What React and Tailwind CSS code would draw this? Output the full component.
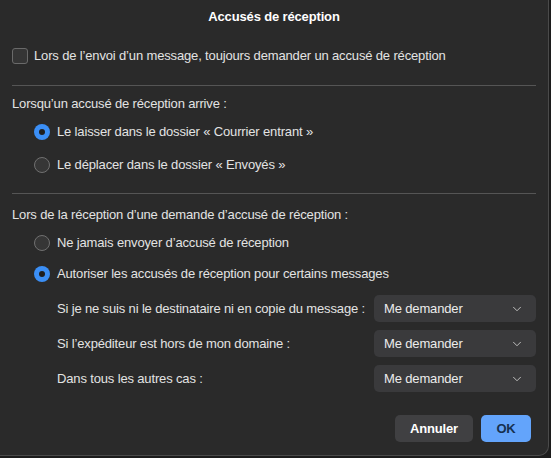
import React from 'react';
import { ChevronDown } from 'lucide-react';

function Radio({ checked, label }) {
  return (
    <label className="flex items-center gap-[7px] h-[16px]">
      {checked ? (
        <span className="flex items-center justify-center w-[16px] h-[16px] rounded-full bg-[#3b8ff6]">
          <span className="w-[6px] h-[6px] rounded-full bg-[#1f1f1f]" />
        </span>
      ) : (
        <span className="w-[16px] h-[16px] rounded-full border border-[#707070] bg-[#363636]" />
      )}
      <span>{label}</span>
    </label>
  );
}

function Select({ value }) {
  return (
    <div className="flex items-center justify-between w-[162px] h-[27px] pl-[10px] pr-[12px] rounded-[5px] bg-[#3a3a3c] text-[#ececec]">
      <span>{value}</span>
      <ChevronDown size={14} strokeWidth={1.5} className="text-[#cfcfcf]" />
    </div>
  );
}

export default function App() {
  const rows = [
    'Si je ne suis ni le destinataire ni en copie du message :',
    "Si l’expéditeur est hors de mon domaine :",
    'Dans tous les autres cas :',
  ];

  return (
    <div className="flex w-[551px] h-[458px] bg-[#1c1c1c]" style={{ fontFamily: '"Liberation Sans", Arial, sans-serif' }}>
      <div className="w-[549px] h-[456px] bg-[#2a2a2a] border-r border-b border-[#4a4a4a] rounded-br-[10px] text-[13px] leading-[16px] tracking-[-0.15px] text-[#e3e3e3]">
        {/* Title */}
        <div className="pt-[9px] text-center font-bold text-white">Accusés de réception</div>

        {/* Request receipt */}
        <div className="mt-[23px] px-[12px] flex items-center gap-[6px] h-[16px]">
          <span className="w-[16px] h-[16px] rounded-[3px] border border-[#6a6a6a] bg-[#353535]" />
          <span>Lors de l’envoi d’un message, toujours demander un accusé de réception</span>
        </div>

        <div className="mx-[12px] mt-[21px] border-t border-[#555555]" />

        {/* Incoming receipt */}
        <div className="px-[12px] pt-[10px]">
          <div>Lorsqu’un accusé de réception arrive :</div>
          <div className="mt-[12px] pl-[22px] flex flex-col gap-[17px]">
            <Radio checked label="Le laisser dans le dossier « Courrier entrant »" />
            <Radio label="Le déplacer dans le dossier « Envoyés »" />
          </div>
        </div>

        <div className="mx-[12px] mt-[20px] border-t border-[#555555]" />

        {/* Request received */}
        <div className="px-[12px] pt-[13px]">
          <div>Lors de la réception d’une demande d’accusé de réception :</div>
          <div className="mt-[12px] pl-[22px] flex flex-col gap-[15px]">
            <Radio label="Ne jamais envoyer d’accusé de réception" />
            <Radio checked label="Autoriser les accusés de réception pour certains messages" />
          </div>
          <div className="mt-[13px] pl-[45px] flex flex-col gap-[8px]">
            {rows.map((r) => (
              <div key={r} className="flex items-center">
                <span className="flex-1">{r}</span>
                <Select value="Me demander" />
              </div>
            ))}
          </div>
        </div>

        {/* Buttons */}
        <div className="mt-[23px] pr-[17px] flex justify-end gap-[8px]">
          <button className="w-[78px] h-[27px] rounded-[5px] bg-[#404042] text-white font-bold">Annuler</button>
          <button className="w-[50px] h-[27px] rounded-[5px] bg-[#63a4fb] text-[#16304f] font-bold">OK</button>
        </div>
      </div>
    </div>
  );
}
